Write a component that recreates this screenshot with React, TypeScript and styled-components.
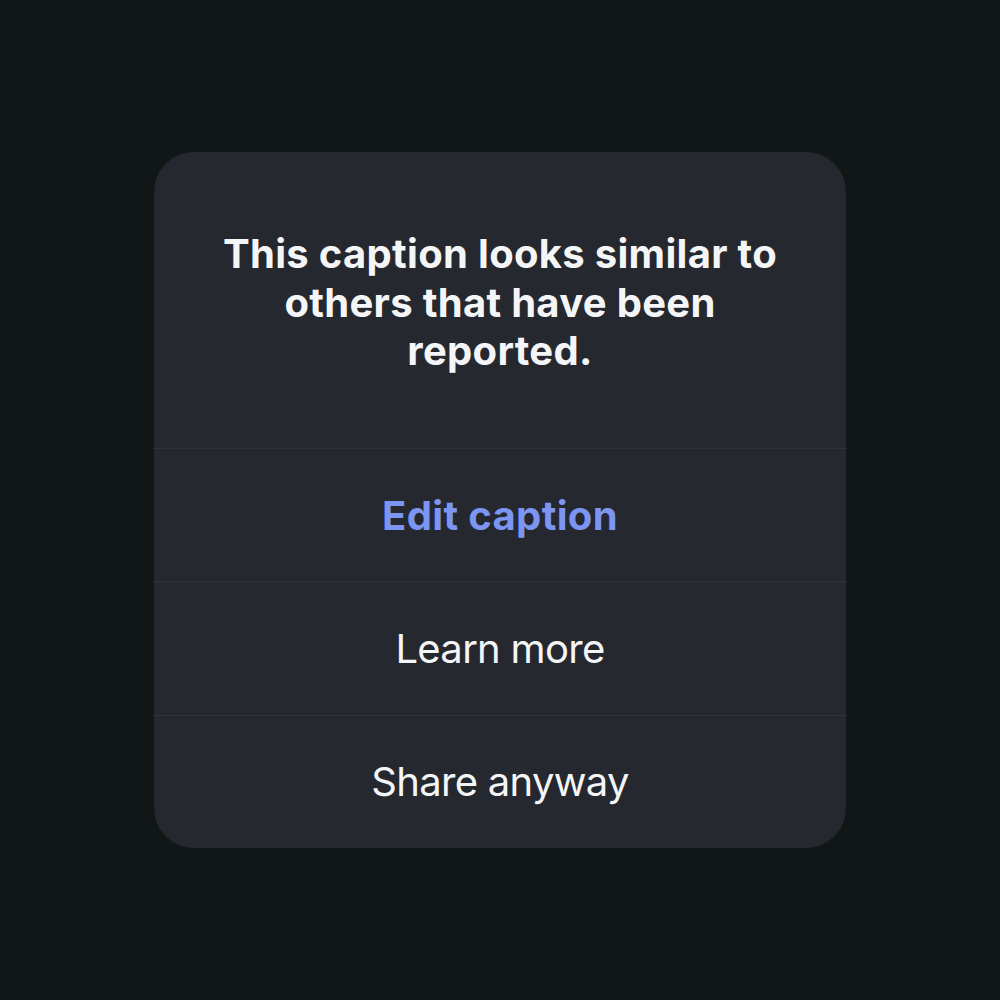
import styled, { createGlobalStyle } from 'styled-components';

const GlobalStyle = createGlobalStyle`
  html, body {
    margin: 0;
    padding: 0;
    background: #111617;
  }
  #root {
    min-height: 100vh;
  }
`;

const Page = styled.div`
  width: 1000px;
  height: 1000px;
  display: flex;
  justify-content: center;
  align-items: center;
  background: #111617;
  font-family: Inter, 'Liberation Sans', sans-serif;
`;

const Dialog = styled.div`
  width: 692px;
  height: 696px;
  background: #25282e;
  border-radius: 40px;
  display: flex;
  flex-direction: column;
  overflow: hidden;
`;

const Header = styled.div`
  height: 296px;
  box-sizing: border-box;
  padding: 6px 50px 0;
  display: flex;
  align-items: center;
  justify-content: center;
`;

const Title = styled.h2`
  margin: 0;
  text-align: center;
  color: #f4f5f7;
  font-size: 40px;
  font-weight: 700;
  line-height: 48.5px;
  letter-spacing: 0.3px;
`;

const Action = styled.button<{ $primary?: boolean }>`
  flex: 1;
  border: none;
  border-top: 1px solid #30333a;
  background: transparent;
  color: ${p => (p.$primary ? '#7c95f3' : '#f4f5f7')};
  font-family: inherit;
  font-size: 40px;
  font-weight: ${p => (p.$primary ? 700 : 400)};
  letter-spacing: ${p => (p.$primary ? '0.35px' : '-0.7px')};
  cursor: pointer;
  display: flex;
  align-items: center;
  justify-content: center;
  padding: 0;
`;

const actions = [
  { label: 'Edit caption', primary: true },
  { label: 'Learn more' },
  { label: 'Share anyway' },
];

const App = () => {
  return (
    <>
      <GlobalStyle />
      <Page>
        <Dialog>
          <Header>
            <Title>This caption looks similar to others that have been reported.</Title>
          </Header>
          {actions.map(a => (
            <Action key={a.label} $primary={a.primary}>
              {a.label}
            </Action>
          ))}
        </Dialog>
      </Page>
    </>
  );
};

export default App;
